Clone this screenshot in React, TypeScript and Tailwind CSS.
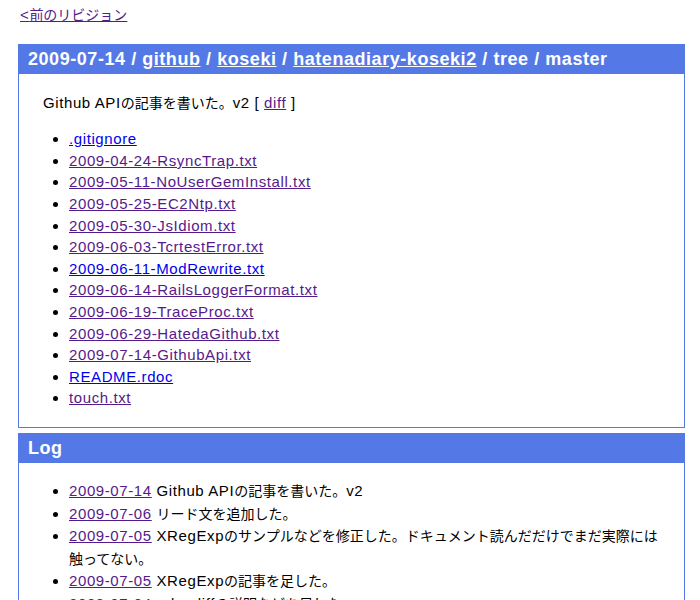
import React from "react";

const files: { name: string; visited: boolean }[] = [
  { name: ".gitignore", visited: false },
  { name: "2009-04-24-RsyncTrap.txt", visited: true },
  { name: "2009-05-11-NoUserGemInstall.txt", visited: true },
  { name: "2009-05-25-EC2Ntp.txt", visited: true },
  { name: "2009-05-30-JsIdiom.txt", visited: true },
  { name: "2009-06-03-TcrtestError.txt", visited: true },
  { name: "2009-06-11-ModRewrite.txt", visited: false },
  { name: "2009-06-14-RailsLoggerFormat.txt", visited: true },
  { name: "2009-06-19-TraceProc.txt", visited: true },
  { name: "2009-06-29-HatedaGithub.txt", visited: true },
  { name: "2009-07-14-GithubApi.txt", visited: true },
  { name: "README.rdoc", visited: false },
  { name: "touch.txt", visited: true },
];

const logs = [
  { date: "2009-07-14", msg: "Github APIの記事を書いた。v2" },
  { date: "2009-07-06", msg: "リード文を追加した。" },
  {
    date: "2009-07-05",
    msg: "XRegExpのサンプルなどを修正した。ドキュメント読んだだけでまだ実際には触ってない。",
  },
  { date: "2009-07-05", msg: "XRegExpの記事を足した。" },
  { date: "2009-07-04", msg: "rake diffの説明などを足した。" },
];

// 和文は少し小さめにして欧文との幅を合わせる
function Ja({ text }: { text: string }) {
  const parts = text.split(/([\u3000-\u30ff\u4e00-\u9fff\uff00-\uffef]+)/);
  return (
    <>
      {parts.map((p, i) =>
        i % 2 === 1 ? (
          <span key={i} className="text-[14px] tracking-normal">
            {p}
          </span>
        ) : (
          <React.Fragment key={i}>{p}</React.Fragment>
        )
      )}
    </>
  );
}

export default function App() {
  return (
    <div
      className="bg-white text-black text-[15px] leading-[21.6px] tracking-[0.6px] px-[18px] pt-[4px] w-[700px] h-[600px] overflow-hidden"
      style={{ fontFamily: '"Liberation Sans", "Noto Sans CJK JP", sans-serif' }}
    >
      <div className="ml-[2px]">
        <a href="#" className="text-[#551a8b] underline">
          &lt;<Ja text="前のリビジョン" />
        </a>
      </div>

      {/* ツリー */}
      <div className="mt-[17px] border border-[#5479e6] w-[667px]">
        <h2 className="bg-[#5479e6] text-white font-bold text-[18px] h-[29px] leading-[29px] pl-[9px] tracking-[0.55px]">
          2009-07-14 / <a href="#" className="underline">github</a> /{" "}
          <a href="#" className="underline">koseki</a> /{" "}
          <a href="#" className="underline">hatenadiary-koseki2</a> / tree /
          master
        </h2>
        <p className="mt-[18px] pl-[24px]">
          <Ja text="Github APIの記事を書いた。v2" /> [{" "}
          <a href="#" className="text-[#551a8b] underline">
            diff
          </a>{" "}
          ]
        </p>
        <ul className="list-disc mt-[14px] mb-[18px] pl-[50px]">
          {files.map((f) => (
            <li key={f.name}>
              <a
                href="#"
                className={`underline ${
                  f.visited ? "text-[#551a8b]" : "text-[#0000ee]"
                }`}
              >
                {f.name}
              </a>
            </li>
          ))}
        </ul>
      </div>

      {/* ログ */}
      <div className="mt-[5px] border border-[#5479e6] w-[667px]">
        <h2 className="bg-[#5479e6] text-white font-bold text-[18px] h-[29px] leading-[29px] pl-[9px] tracking-[0.55px]">
          Log
        </h2>
        <ul className="list-disc mt-[17px] pl-[50px] pr-[20px]">
          {logs.map((l, i) => (
            <li key={i}>
              <a href="#" className="text-[#551a8b] underline">
                {l.date}
              </a>{" "}
              <Ja text={l.msg} />
            </li>
          ))}
        </ul>
      </div>
    </div>
  );
}
